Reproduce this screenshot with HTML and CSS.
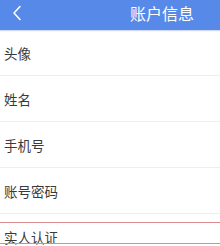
FILE: index.html
```html
<!DOCTYPE html>
<html lang="zh">
<head>
<meta charset="utf-8">
<link rel="stylesheet" href="styles.css">
</head>
<body>
<header class="topbar">
  <svg class="back" width="10" height="16" viewBox="0 0 10 16"><path d="M8 1.5 L2 8 L8 14.5" fill="none" stroke="#fff" stroke-width="1.6" stroke-linecap="round" stroke-linejoin="round"/></svg>
  <span class="title">账户信息</span>
</header>
<ul class="list">
  <li class="row">头像</li>
  <li class="row">姓名</li>
  <li class="row">手机号</li>
  <li class="row">账号密码</li>
  <li class="row marked">实人认证</li>
</ul>
</body>
</html>
```
FILE: styles.css
```css
html, body {
  margin: 0;
  padding: 0;
  background: #fff;
  width: 220px;
  height: 246px;
  overflow: hidden;
  font-family: "Noto Sans CJK SC", "Noto Sans", sans-serif;
}
.topbar {
  height: 30px;
  background: #5789e9;
  display: flex;
  align-items: center;
  justify-content: space-between;
  padding: 0 26px 0 12px;
  box-shadow: 0 1px 1px rgba(120,150,220,0.35);
}
.back {
  display: block;
  margin-top: -4px;
}
.title {
  color: #fff;
  font-size: 16px;
  line-height: 16px;
  margin-top: -4px;
}
.list {
  list-style: none;
  margin: 0;
  padding: 0;
}
.row {
  height: 45px;
  border-bottom: 1px solid #eeeeee;
  display: flex;
  align-items: center;
  padding-left: 4px;
  font-size: 13.5px;
  color: #3a3a3a;
}
.marked {
  position: relative;
  align-items: flex-start;
  box-sizing: border-box;
  height: 32px;
  padding-top: 15px;
  line-height: 16px;
  border-bottom: none;
}
.marked::before {
  content: "";
  position: absolute;
  left: 0;
  right: 0;
  top: 8px;
  height: 20px;
  border-top: 1px solid #d88c92;
  border-bottom: 1px solid #d88c92;
}
```
